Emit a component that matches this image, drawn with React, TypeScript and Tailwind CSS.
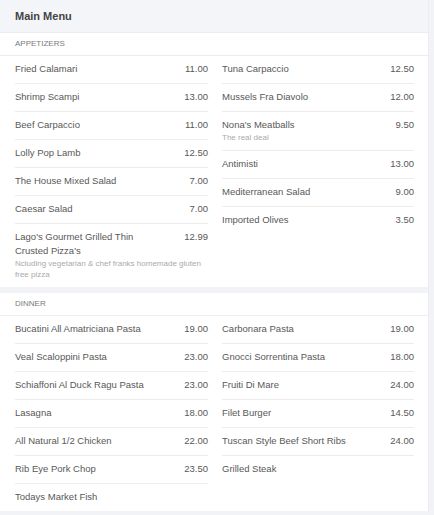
type Item = { name: string; price?: string; desc?: string };

const appetizersLeft: Item[] = [
  { name: "Fried Calamari", price: "11.00" },
  { name: "Shrimp Scampi", price: "13.00" },
  { name: "Beef Carpaccio", price: "11.00" },
  { name: "Lolly Pop Lamb", price: "12.50" },
  { name: "The House Mixed Salad", price: "7.00" },
  { name: "Caesar Salad", price: "7.00" },
  {
    name: "Lago's Gourmet Grilled Thin Crusted Pizza's",
    price: "12.99",
    desc: "Ncluding vegetarian & chef franks homemade gluten free pizza",
  },
];

const appetizersRight: Item[] = [
  { name: "Tuna Carpaccio", price: "12.50" },
  { name: "Mussels Fra Diavolo", price: "12.00" },
  { name: "Nona's Meatballs", price: "9.50", desc: "The real deal" },
  { name: "Antimisti", price: "13.00" },
  { name: "Mediterranean Salad", price: "9.00" },
  { name: "Imported Olives", price: "3.50" },
];

const dinnerLeft: Item[] = [
  { name: "Bucatini All Amatriciana Pasta", price: "19.00" },
  { name: "Veal Scaloppini Pasta", price: "23.00" },
  { name: "Schiaffoni Al Duck Ragu Pasta", price: "23.00" },
  { name: "Lasagna", price: "18.00" },
  { name: "All Natural 1/2 Chicken", price: "22.00" },
  { name: "Rib Eye Pork Chop", price: "23.50" },
  { name: "Todays Market Fish" },
];

const dinnerRight: Item[] = [
  { name: "Carbonara Pasta", price: "19.00" },
  { name: "Gnocci Sorrentina Pasta", price: "18.00" },
  { name: "Fruiti Di Mare", price: "24.00" },
  { name: "Filet Burger", price: "14.50" },
  { name: "Tuscan Style Beef Short Ribs", price: "24.00" },
  { name: "Grilled Steak" },
];

function Column({ items }: { items: Item[] }) {
  return (
    <ul>
      {items.map((item, i) => (
        <li
          key={item.name}
          className={
            i === items.length - 1
              ? "pt-[6px] pb-[7px]"
              : "pt-[6px] pb-[7px] border-b border-[#ededed]"
          }
        >
          <div className="flex justify-between gap-4 text-[9.5px] leading-[14px] text-[#585858]">
            <span className="max-w-[150px]">{item.name}</span>
            {item.price && <span>{item.price}</span>}
          </div>
          {item.desc && (
            <p className="text-[8px] leading-[11px] text-[#aaa]">{item.desc}</p>
          )}
        </li>
      ))}
    </ul>
  );
}

function Section({ title, left, right }: { title: string; left: Item[]; right: Item[] }) {
  return (
    <section className="bg-white">
      <div className="h-[23px] flex items-center px-[15px] border-b border-[#ededed] text-[8px] text-[#7a7a7a] uppercase">
        {title}
      </div>
      <div className="grid grid-cols-[193px_192px] gap-x-[14px] pl-[15px]">
        <Column items={left} />
        <Column items={right} />
      </div>
    </section>
  );
}

export default function App() {
  return (
    <main
      className="min-h-screen w-[434px] bg-[#f2f3f6]"
      style={{ fontFamily: '"Liberation Sans", Arial, sans-serif' }}
    >
      <div className="w-[429px] border-r border-[#ebecef]">
        <div className="h-[33px] flex items-center px-[15px] bg-[#f4f5f9] border-b border-[#ebecef] text-[11px] font-bold text-[#444]">
          Main Menu
        </div>
        <Section title="Appetizers" left={appetizersLeft} right={appetizersRight} />
        <div className="h-[6px] bg-[#f2f3f6]" />
        <Section title="Dinner" left={dinnerLeft} right={dinnerRight} />
      </div>
    </main>
  );
}
